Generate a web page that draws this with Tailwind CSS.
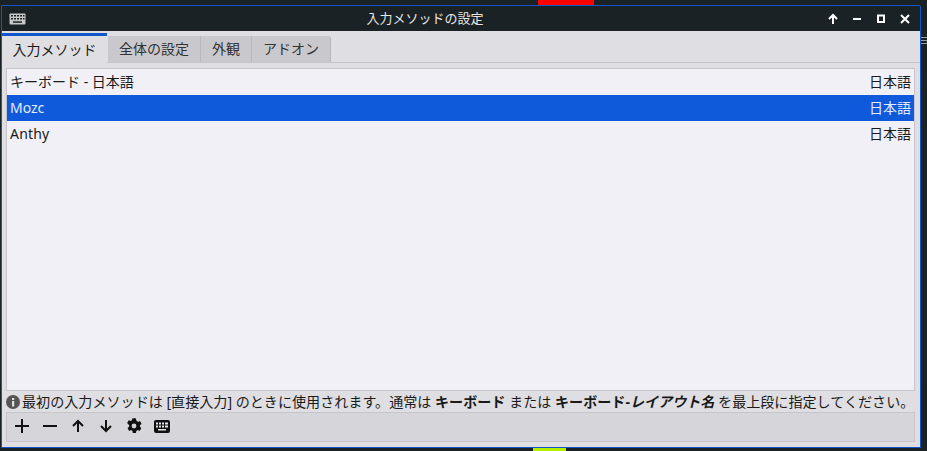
<!DOCTYPE html>
<html lang="ja"><head><meta charset="utf-8">
<script src="https://cdn.jsdelivr.net/npm/@tailwindcss/browser@4"></script>
</head>
<body class="m-0">
<div class="relative w-[927px] h-[451px] overflow-hidden bg-[#1b2225] font-['Noto_Sans','Noto_Sans_CJK_JP',sans-serif] text-[14px] text-[#1a1a1a] pt-[5px] pl-px">
  <div class="absolute left-[538px] top-0 w-[56px] h-[5px] bg-[#ff0000]"></div>
  <div class="absolute left-[533px] top-[448px] w-[33px] h-[3px] bg-[#b4f000]"></div>
  <div class="absolute left-[921px] top-[36px] w-[6px] h-[10px] flex flex-col gap-[2px] pt-px"><div class="h-px bg-[#9a9ea0]"></div><div class="h-px bg-[#9a9ea0]"></div><div class="h-px bg-[#9a9ea0]"></div></div>
  <div class="w-[920px] h-[443px] border border-[#1257c9] rounded-t-[2px] flex flex-col bg-[#dfdfe3]">
    <div class="h-[25px] shrink-0 bg-[#1b2225] flex items-center pl-[7px] pr-[8px] text-white">
      <svg width="17" height="12" viewBox="0 0 17 12"><rect x=".5" y=".5" width="16" height="11" rx="1" fill="#c8c8c8"/><g fill="#1b2225"><rect x="2" y="2" width="2" height="1.5"/><rect x="5" y="2" width="2" height="1.5"/><rect x="8" y="2" width="2" height="1.5"/><rect x="11" y="2" width="2" height="1.5"/><rect x="14" y="2" width="1.5" height="1.5"/><rect x="2" y="5" width="2" height="1.5"/><rect x="5" y="5" width="2" height="1.5"/><rect x="8" y="5" width="2" height="1.5"/><rect x="11" y="5" width="2" height="1.5"/><rect x="14" y="5" width="1.5" height="1.5"/><rect x="4" y="8.3" width="9" height="1.5"/></g></svg>
      <div class="flex-1 text-center text-[13px] text-[#e8e8e8] leading-none pr-[2px]">入力メソッドの設定</div>
      <div class="flex items-center gap-[10px]">
        <svg width="14" height="14" viewBox="0 0 14 14" fill="none" stroke="#fff" stroke-width="2"><path d="M7 12V3M3 7l4-4 4 4"/></svg>
        <svg width="14" height="14" viewBox="0 0 14 14"><rect x="3" y="6" width="8" height="2" fill="#fff"/></svg>
        <svg width="14" height="14" viewBox="0 0 14 14" fill="none" stroke="#fff" stroke-width="2"><rect x="4" y="3.5" width="6" height="6.500"/></svg>
        <svg width="14" height="14" viewBox="0 0 14 14" fill="none" stroke="#fff" stroke-width="2"><path d="M3 3l8 8M11 3l-8 8"/></svg>
      </div>
    </div>
    <div class="flex items-end h-[32px] shrink-0 border-b border-[#c6c6ca]">
      <div class="w-[105px] h-[30px] -mb-px mr-px bg-[#dfdfe3] border-t-[3px] border-[#1257c9] text-center leading-[27px]">入力メソッド</div>
      <div class="w-[93px] h-[26px] bg-[#c9c9cd] border-r border-[#b9b9bd] text-center leading-[26px] text-[#333]">全体の設定</div>
      <div class="w-[51px] h-[26px] bg-[#c9c9cd] border-r border-[#b9b9bd] text-center leading-[26px] text-[#333]">外観</div>
      <div class="w-[79px] h-[26px] bg-[#c9c9cd] border-r border-[#b9b9bd] rounded-tr-[3px] text-center leading-[26px] text-[#333]">アドオン</div>
    </div>
    <div class="flex-1 flex flex-col pl-[4px] pr-[5px] pt-[5px] pb-[5px] min-h-0">
      <div class="h-[323px] shrink-0 bg-[#f0f0f6] border border-[#c6c6ca]">
        <div class="h-[26px] flex justify-between items-center pl-[3px] pr-[3px] pb-[2px]"><span>キーボード - 日本語</span><span>日本語</span></div>
        <div class="h-[26px] flex justify-between items-center pl-[3px] pr-[3px] pb-[2px] bg-[#0f5adb] text-[#e4ecff]"><span>Mozc</span><span>日本語</span></div>
        <div class="h-[26px] flex justify-between items-center pl-[3px] pr-[3px] pb-[2px]"><span class="tracking-[0.2px]">Anthy</span><span>日本語</span></div>
      </div>
      <div class="h-[21px] shrink-0 flex items-center whitespace-nowrap gap-[2px] text-[14.08px]">
        <svg class="shrink-0" width="14" height="14" viewBox="0 0 14 14"><circle cx="7" cy="7" r="7" fill="#555"/><rect x="6" y="6" width="2.200" height="5.500" fill="#dfdfe3"/><rect x="6" y="3" width="2.200" height="2" fill="#dfdfe3"/></svg>
        <span>最初の入力メソッドは [直接入力] のときに使用されます。通常は <b class="font-bold">キーボード</b> または <b class="font-bold">キーボード-<i>レイアウト名</i></b> を最上段に指定してください。</span>
      </div>
      <div class="flex-1 bg-[#d6d6da] border border-[#c6c6ca] flex items-center pl-[7px] pb-[2px] gap-[12px]">
        <svg width="16" height="16" viewBox="0 0 16 16" fill="none" stroke="#111" stroke-width="2"><path d="M8 1v14M1 8h14"/></svg>
        <svg width="16" height="16" viewBox="0 0 16 16" fill="none" stroke="#111" stroke-width="2"><path d="M1 8h14"/></svg>
        <svg width="16" height="16" viewBox="0 0 16 16" fill="none" stroke="#111" stroke-width="2"><path d="M8 14V3M3 8l5-5 5 5"/></svg>
        <svg width="16" height="16" viewBox="0 0 16 16" fill="none" stroke="#111" stroke-width="2"><path d="M8 2v11M3 8l5 5 5-5"/></svg>
        <svg width="16" height="16" viewBox="3 2 18 20" fill="#111"><path fill-rule="evenodd" d="M19.400 13c.1-.3.1-.7.1-1s0-.7-.1-1l2.100-1.600-2-3.500-2.500 1c-.5-.4-1.100-.7-1.700-1L14 2.300h-4l-.4 2.600c-.6.3-1.200.6-1.700 1l-2.500-1-2 3.500L6 11c-.1.3-.1.700-.1 1s0 .7.1 1l-2.100 1.600 2 3.500 2.500-1c.5.4 1.100.7 1.700 1l.4 2.600h4l.4-2.600c.6-.3 1.200-.6 1.700-1l2.500 1 2-3.500zM12 15a3 3 0 1 1 0-6 3 3 0 0 1 0 6z"/></svg>
        <svg width="16" height="13" viewBox="0 0 16 13"><rect width="16" height="13" rx="2" fill="#111"/><g fill="#e4e4e8"><rect x="2" y="2.500" width="2" height="2"/><rect x="5" y="2.500" width="2" height="2"/><rect x="8" y="2.500" width="2" height="2"/><rect x="11" y="2.500" width="3" height="2"/><rect x="2" y="5.500" width="2" height="2"/><rect x="5" y="5.500" width="2" height="2"/><rect x="8" y="5.500" width="2" height="2"/><rect x="11" y="5.500" width="3" height="2"/><rect x="4" y="9" width="8" height="1.500"/></g></svg>
      </div>
    </div>
  </div>
</div>
</body></html>
